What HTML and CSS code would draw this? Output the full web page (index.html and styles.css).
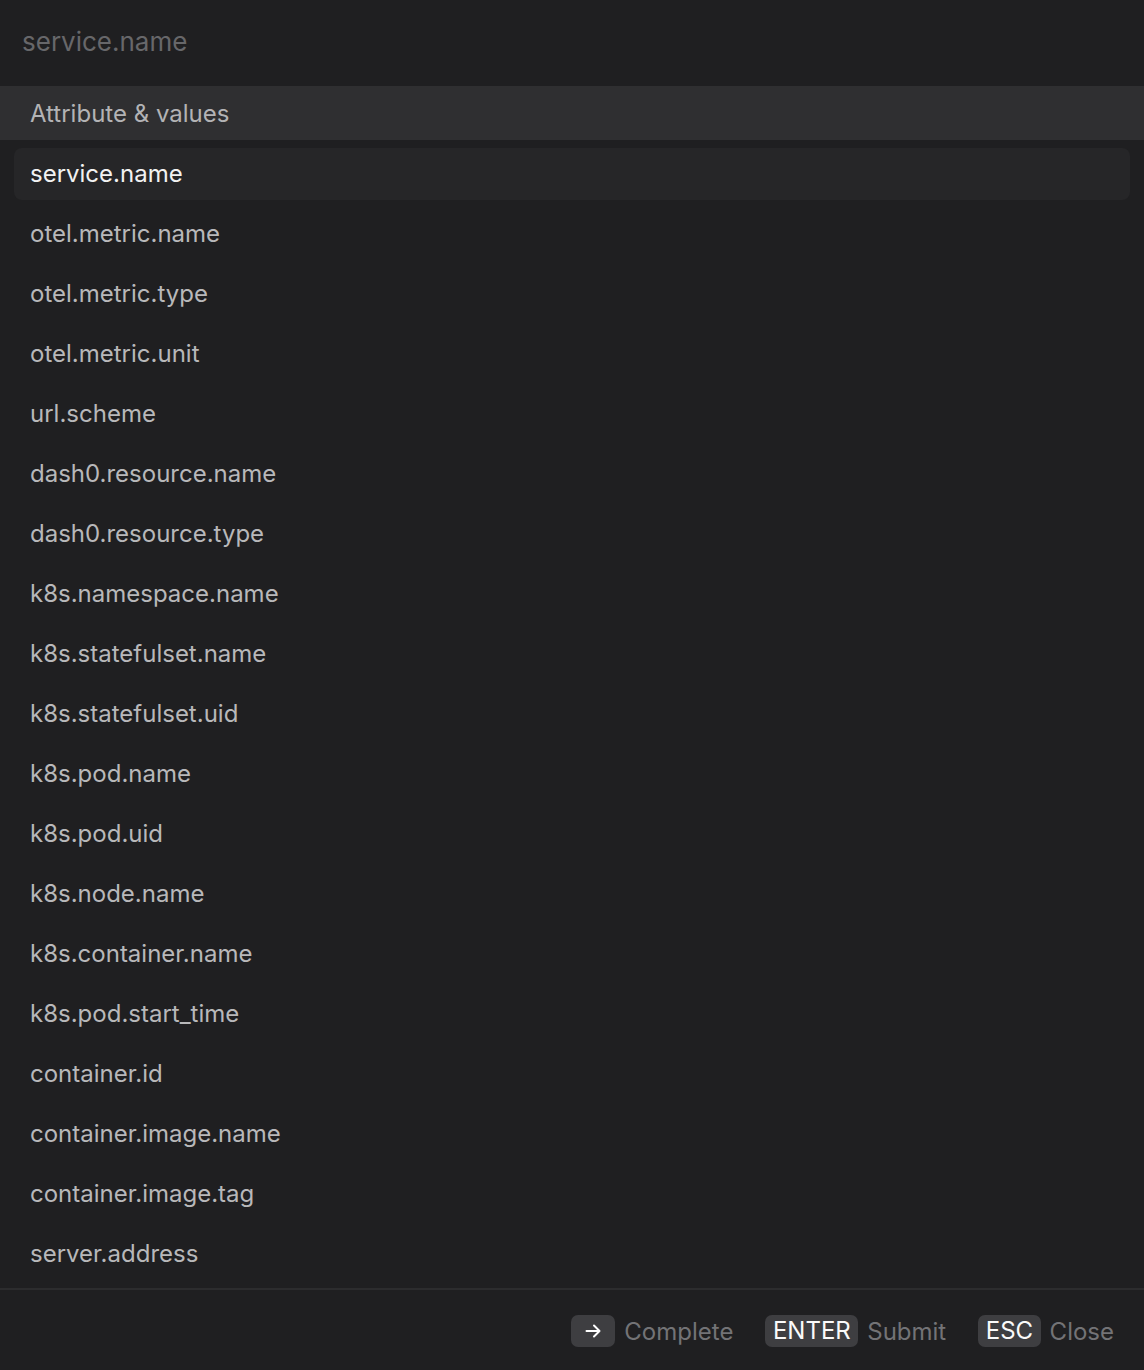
FILE: index.html
```html
<!DOCTYPE html>
<html>
<head>
<meta charset="utf-8">
<link rel="stylesheet" href="styles.css">
</head>
<body>
<div class="dialog">
  <div class="search"><span class="placeholder">service.name</span></div>
  <div class="group">Attribute &amp; values</div>
  <ul class="list">
    <li class="item selected">service.name</li>
    <li class="item">otel.metric.name</li>
    <li class="item">otel.metric.type</li>
    <li class="item">otel.metric.unit</li>
    <li class="item">url.scheme</li>
    <li class="item">dash0.resource.name</li>
    <li class="item">dash0.resource.type</li>
    <li class="item">k8s.namespace.name</li>
    <li class="item">k8s.statefulset.name</li>
    <li class="item">k8s.statefulset.uid</li>
    <li class="item">k8s.pod.name</li>
    <li class="item">k8s.pod.uid</li>
    <li class="item">k8s.node.name</li>
    <li class="item">k8s.container.name</li>
    <li class="item">k8s.pod.start_time</li>
    <li class="item">container.id</li>
    <li class="item">container.image.name</li>
    <li class="item">container.image.tag</li>
    <li class="item">server.address</li>
  </ul>
  <div class="footer">
    <div class="hint"><span class="key key-icon"><svg width="18" height="18" viewBox="0 0 18 18" fill="none" stroke="#fff" stroke-width="2" stroke-linecap="round" stroke-linejoin="round"><path d="M2.5 9h13M10 3.5L15.5 9 10 14.5"/></svg></span><span class="label">Complete</span></div>
    <div class="hint"><span class="key">ENTER</span><span class="label">Submit</span></div>
    <div class="hint"><span class="key">ESC</span><span class="label">Close</span></div>
  </div>
</div>
</body>
</html>
```

FILE: styles.css
```css
* { box-sizing: border-box; }
html, body { margin: 0; padding: 0; background: #1f1f21; }
body {
  font-family: Inter, "Noto Sans", "Liberation Sans", sans-serif;
  font-size: 24px;
  color: #b8b8ba;
}
.dialog {
  width: 1144px;
  height: 1370px;
  display: flex;
  flex-direction: column;
  background: #1f1f21;
}
.search {
  height: 86px;
  display: flex;
  align-items: center;
  padding-left: 22px;
  padding-bottom: 3px;
}
.placeholder { color: #67676a; font-size: 26px; }
.group {
  height: 54px;
  background: #2f2f31;
  display: flex;
  align-items: center;
  padding-left: 30px;
  color: #b3b3b5;
}
.list {
  list-style: none;
  margin: 0;
  padding: 8px 14px;
  display: flex;
  flex-direction: column;
  gap: 8px;
}
.item {
  height: 52px;
  display: flex;
  align-items: center;
  padding-left: 16px;
  padding-bottom: 2px;
  border-radius: 8px;
  color: #b8b8ba;
}
.item.selected {
  background: #262628;
  color: #f2f2f2;
}
.footer {
  flex: 1;
  border-top: 2px solid #2c2c2e;
  display: flex;
  justify-content: flex-end;
  align-items: center;
  padding-right: 30px;
  padding-top: 2px;
  gap: 32px;
}
.hint {
  display: flex;
  align-items: center;
  gap: 9px;
}
.key {
  height: 32px;
  border-radius: 7px;
  background: #3e3e41;
  color: #fafafa;
  padding: 0 7.5px 1px;
  display: flex;
  align-items: center;
  line-height: 1;
}
.key-icon {
  width: 44px;
  justify-content: center;
  padding: 0;
}
.label { color: #737376; }
```
